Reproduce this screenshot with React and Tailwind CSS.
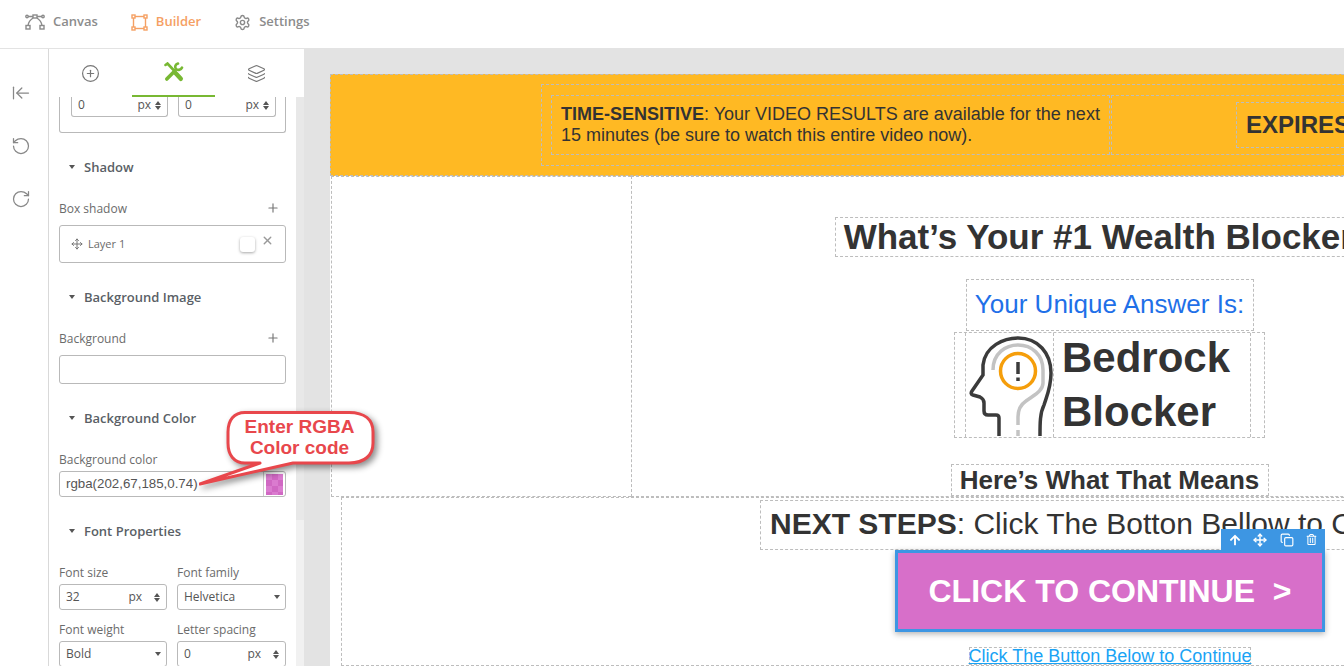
import { ArrowLeftToLine, CirclePlus, Copy, Layers, Move, Plus, RotateCcw, RotateCw, Settings, X } from 'lucide-react';
import { FaArrowUp, FaRegTrashAlt } from 'react-icons/fa';

function CanvasIcon() {
  return (
    <svg width="20" height="16" viewBox="0 0 20 16" fill="none" stroke="#8a8a8a" strokeWidth="1.4">
      <rect x="8" y="1" width="4" height="3" />
      <rect x="1" y="11.5" width="4" height="3.5" />
      <rect x="15" y="11.5" width="4" height="3.5" />
      <circle cx="2" cy="2.5" r="1.2" />
      <circle cx="18" cy="2.5" r="1.2" />
      <path d="M3 2.5h5M12 2.5h5M8 4C5 6 3.5 8 3 11.5M12 4c3 2 4.500 4 5 7.500" />
    </svg>
  );
}

function BuilderIcon() {
  return (
    <svg width="17" height="17" viewBox="0 0 17 17" fill="none" stroke="#f5a063" strokeWidth="1.4">
      <rect x="2.500" y="2.500" width="12" height="12" />
      <rect x="1" y="1" width="3" height="3" fill="#fff" />
      <rect x="13" y="1" width="3" height="3" fill="#fff" />
      <rect x="1" y="13" width="3" height="3" fill="#fff" />
      <rect x="13" y="13" width="3" height="3" fill="#fff" />
    </svg>
  );
}

function ToolsIcon() {
  return (
    <svg width="20" height="20" viewBox="0 0 20 20" fill="none" stroke="#78b833" strokeLinecap="round">
      {/* screwdriver */}
      <path d="M1.500 3L3.500 1.500L10.500 9" strokeWidth="2.600" />
      <path d="M11.500 11L16.800 16.800" strokeWidth="4.400" />
      {/* wrench */}
      <path d="M2.800 17L11 8.800" strokeWidth="3.600" />
      <path d="M14 1.500C11.500 2.200 10.600 4.600 11.800 6.800C13.600 8.600 16.800 8.200 18 5.600" strokeWidth="2.600" />
    </svg>
  );
}

function NavItem({ icon, label, active }) {
  return (
    <div className="flex items-center gap-[8px]">
      {icon}
      <span className={`text-[13px] font-semibold ${active ? 'text-[#f5a063]' : 'text-[#8c8c8c]'}`}>{label}</span>
    </div>
  );
}

function SectionTitle({ children, className }) {
  return (
    <div className={`flex items-center pl-[20px] text-[13px] font-semibold leading-[18px] text-[#5a5f66] ${className}`}>
      <span className="mr-[9px] h-0 w-0 border-x-[3.500px] border-t-[4px] border-x-transparent border-t-[#555]" />
      {children}
    </div>
  );
}

function Label({ children, className = '' }) {
  return <div className={`text-xs leading-4 text-[#6b6b6b] ${className}`}>{children}</div>;
}

function Spinner() {
  return (
    <span className="flex w-[8px] flex-col items-center gap-[1px]">
      <span className="h-0 w-0 border-x-[3.500px] border-b-[4px] border-x-transparent border-b-[#555]" />
      <span className="h-0 w-0 border-x-[3.500px] border-t-[4px] border-x-transparent border-t-[#555]" />
    </span>
  );
}

function Caret() {
  return <span className="h-0 w-0 border-x-[3.500px] border-t-[4px] border-x-transparent border-t-[#555]" />;
}

function Field({ value, unit, select }) {
  return (
    <div className="flex h-[26px] items-center rounded-[3px] border border-[#b9b9b9] bg-white pl-[6px] pr-[5px] font-['Open_Sans'] text-xs text-[#555]">
      <span className="flex-1">{value}</span>
      {unit && <span className="mr-[11px]">{unit}</span>}
      {select ? <Caret /> : <Spinner />}
    </div>
  );
}

// the top of this one is scrolled away under the tabs
function CutField({ className }) {
  return (
    <div className={`flex h-[20px] items-center rounded-b-[3px] border-x border-b border-[#b9b9b9] pb-[3px] pl-[6px] pr-[5px] text-xs leading-4 text-[#555] ${className}`}>
      <span className="flex-1">0</span>
      <span className="mr-[3px]">px</span>
      <Spinner />
    </div>
  );
}

function Dashed({ className = '', children }) {
  return <div className={`border border-dashed border-[#bdbdbd] ${className}`}>{children}</div>;
}

function HeadIcon() {
  return (
    <svg width="88" height="103" viewBox="0 0 88 103" fill="none" strokeWidth="3.500">
      <path d="M33 103V85Q33 82 30 82H22Q18 82 18 78V70Q18 66 14 64L7 62Q4 61 6 58L17 42V32C19 13 38 5 52 5C72 5 85 20 85 40C85 55 80 65 78 72C74 80 74 90 74 103" stroke="#3b3b3b" />
      <path d="M27 37C27 20 40 12 52 12C66 12 77 22 77 37V50C77 58 68 62 60 68C54 72 52 78 52 84V92M52 97V103" stroke="#c3c3c3" />
      <circle cx="52" cy="38" r="17.500" stroke="#f59e0b" />
      <path d="M52 29V41M52 44.500V48" stroke="#3b3b3b" />
    </svg>
  );
}

function Callout() {
  return (
    <div className="absolute left-[150px] top-[361px] h-[80px] w-[190px]">
      <svg width="190" height="80" viewBox="0 0 190 80" fill="none" className="drop-shadow-[3px_3px_3px_rgba(0,0,0,0.45)]">
        <path d="M46 2.500H150C166 2.500 174 10 174 22V33C174 45 166 53 150 53H94L1 74L61 53H46C35 53 29 45 29 33V22C29 10 35 2.500 46 2.500Z" fill="#fff" stroke="#e8474c" strokeWidth="3" strokeLinejoin="round" />
      </svg>
      <div className="absolute left-[29px] top-[6px] w-[143px] text-center font-['Liberation_Sans'] text-[19px] font-bold leading-[21px] text-[#e8474c]">
        Enter RGBA<br />Color code
      </div>
    </div>
  );
}

function SidePanel() {
  return (
    <aside className="relative flex w-[255px] shrink-0 flex-col bg-white font-['Open_Sans']">
      <div className="flex h-[48px] shrink-0 items-stretch bg-white text-[#777]">
        <div className="flex w-[83px] items-center justify-center">
          <CirclePlus size={19} strokeWidth={1.500} />
        </div>
        <div className="flex w-[83px] items-center justify-center border-b-2 border-[#78b833]">
          <ToolsIcon />
        </div>
        <div className="flex w-[83px] items-center justify-center">
          <Layers size={19} strokeWidth={1.500} />
        </div>
      </div>
      <div className="flex min-h-0 flex-1 overflow-hidden">
        <div className="w-[247px] overflow-hidden px-[10px]">
          <div className="flex h-[36px] gap-[10px] rounded-b-[3px] border-x border-b border-[#b9b9b9] pl-[11px]">
            <CutField className="w-[97px]" />
            <CutField className="w-[98px]" />
          </div>
          <SectionTitle className="-mx-[10px] mt-[25px]">Shadow</SectionTitle>
          <div className="mt-[25px] flex items-center justify-between pr-[6px]">
            <Label>Box shadow</Label>
            <Plus size={14} className="-mt-[2px] text-[#777]" />
          </div>
          <div className="mt-[8px] flex h-[38px] items-center rounded-[3px] border border-[#b9b9b9] pl-[11px] pr-[11px] text-[11px] text-[#6b6b6b]">
            <Move size={12} className="mr-[5px] text-[#777]" />
            <span className="flex-1">Layer 1</span>
            <span className="mr-[6px] mt-[1px] h-[15px] w-[15px] rounded-[3px] bg-white shadow-[0_1px_3px_rgba(0,0,0,0.35)]" />
            <X size={13} strokeWidth={2.500} className="-mt-[8px] text-[#999]" />
          </div>
          <SectionTitle className="-mx-[10px] mt-[25px]">Background Image</SectionTitle>
          <div className="mt-[25px] flex items-center justify-between pr-[6px]">
            <Label>Background</Label>
            <Plus size={14} className="-mt-[2px] text-[#777]" />
          </div>
          <div className="mt-[8px] h-[29px] rounded-[3px] border border-[#b9b9b9]" />
          <SectionTitle className="-mx-[10px] mt-[25px]">Background Color</SectionTitle>
          <Label className="mt-[25px]">Background color</Label>
          <div className="mt-[3px] flex h-[26px] items-center justify-between rounded-[3px] border border-[#b9b9b9] pl-[6px] font-['Liberation_Sans'] text-[13.300px] text-[#555]">
            rgba(202,67,185,0.74)
            <span className="flex h-full w-[22px] items-center justify-center border-l border-[#ccc]">
              <span className="h-[21px] w-[17px] bg-[repeating-conic-gradient(#d068c3_0_25%,#da7bcf_0_50%)] bg-[length:12px_12px]" />
            </span>
          </div>
          <SectionTitle className="-mx-[10px] mt-[25px]">Font Properties</SectionTitle>
          <div className="mt-[25px] grid grid-cols-[108px_109px] gap-x-[10px] gap-y-[12px]">
            <div>
              <Label className="mb-[3px]">Font size</Label>
              <Field value="32" unit="px" />
            </div>
            <div>
              <Label className="mb-[3px]">Font family</Label>
              <Field value="Helvetica" select />
            </div>
            <div>
              <Label className="mb-[3px]">Font weight</Label>
              <Field value="Bold" select />
            </div>
            <div>
              <Label className="mb-[3px]">Letter spacing</Label>
              <Field value="0" unit="px" />
            </div>
          </div>
        </div>
        <div className="w-[8px] bg-[#f1f1f1]">
          <div className="h-[423px] bg-[#e8e8e8]" />
        </div>
      </div>
      <Callout />
    </aside>
  );
}

function PageCanvas() {
  return (
    <main className="min-w-0 flex-1 overflow-hidden bg-[#e3e3e3] pl-[26px] pt-[25px] font-['Liberation_Sans'] text-[#333]">
      <div className="w-[1560px] bg-white">
        <Dashed className="flex h-[102px] items-center bg-[#ffb923] pl-[210px]">
          <Dashed className="flex h-[82px] w-[1100px] shrink-0 items-center gap-[1px] pl-[9px]">
            <Dashed className="h-[60px] w-[559px] shrink-0 whitespace-nowrap py-[8px] pl-[9px] text-lg leading-[21px]">
              <b>TIME-SENSITIVE</b>: Your VIDEO RESULTS are available for the next<br />
              15 minutes (be sure to watch this entire video now).
            </Dashed>
            <Dashed className="flex h-[60px] flex-1 items-center pl-[124px]">
              <Dashed className="flex h-[46px] flex-1 items-center pl-[9px] text-2xl font-bold whitespace-nowrap">EXPIRES IN 14:59</Dashed>
            </Dashed>
          </Dashed>
        </Dashed>
        <div className="flex h-[321px] pl-[1px]">
          <Dashed className="w-[300px] shrink-0 border-r-0" />
          <Dashed className="flex w-[957px] shrink-0 flex-col items-center pt-[40px]">
            <Dashed className="flex h-[40px] w-[550px] items-center justify-center whitespace-nowrap text-[35px] font-bold">What’s Your #1 Wealth Blocker?</Dashed>
            <Dashed className="mt-[22px] flex h-[52px] w-[288px] items-center justify-center pb-[2px] text-[26px] text-[#1f70e8]">Your Unique Answer Is:</Dashed>
            <Dashed className="mt-[1px] flex h-[106px] w-[311px] pl-[10px]">
              <Dashed className="flex h-full w-[286px] border-y-0">
                <Dashed className="h-full w-[88px] border-y-0 border-l-0">
                  <HeadIcon />
                </Dashed>
                <div className="-mt-[2px] pl-[8px] text-[42px] font-bold leading-[54px]">Bedrock<br />Blocker</div>
              </Dashed>
            </Dashed>
            <Dashed className="mt-[26px] flex h-[32px] w-[318px] items-center justify-center text-[26px] font-bold">Here’s What That Means</Dashed>
          </Dashed>
        </div>
        <Dashed className="relative ml-[11px] flex h-[169px] w-[1538px] flex-col items-center pt-[2px]">
          <Dashed className="flex h-[50px] w-[700px] items-center whitespace-nowrap pb-[2px] pl-[9px] text-3xl">
            <span><b>NEXT STEPS</b>: Click The Botton Bellow to Continue</span>
          </Dashed>
          <div className="relative">
            <div className="flex h-[82px] w-[430px] items-center justify-center border-[3px] border-[#3d96e3] bg-[#d76fc9] text-[32px] font-bold whitespace-pre text-white shadow-[0_2px_6px_rgba(0,0,0,0.3)]">
              CLICK TO CONTINUE  &gt;
            </div>
            <div className="absolute right-0 -top-[21px] flex h-[21px] w-[104px] items-center justify-around bg-[#3d96e3] px-[2px] text-white">
              <FaArrowUp size={12} />
              <Move size={14} strokeWidth={2.500} />
              <Copy size={14} />
              <FaRegTrashAlt size={11} />
            </div>
          </div>
          <Dashed className="mt-[15px] flex h-[18px] w-[282px] items-center justify-center whitespace-nowrap text-lg text-[#1aa3f5] underline">Click The Button Below to Continue</Dashed>
        </Dashed>
      </div>
    </main>
  );
}

export default function App() {
  return (
    <div className="flex h-[666px] w-[1344px] flex-col overflow-hidden bg-white font-['Open_Sans']">
      <header className="flex h-[49px] shrink-0 items-center gap-[33px] border-b border-[#e3e3e3] pb-[4px] pl-[25px]">
        <NavItem icon={<CanvasIcon />} label="Canvas" />
        <NavItem icon={<BuilderIcon />} label="Builder" active />
        <NavItem icon={<Settings size={17} className="text-[#8a8a8a]" />} label="Settings" />
      </header>
      <div className="flex min-h-0 flex-1">
        <nav className="flex w-[49px] shrink-0 flex-col items-center gap-[33px] border-r border-[#d9d9d9] pr-[6px] pt-[34px] text-[#888]">
          <ArrowLeftToLine size={20} strokeWidth={1.500} />
          <RotateCcw size={20} strokeWidth={1.500} />
          <RotateCw size={20} strokeWidth={1.500} />
        </nav>
        <SidePanel />
        <PageCanvas />
      </div>
    </div>
  );
}
